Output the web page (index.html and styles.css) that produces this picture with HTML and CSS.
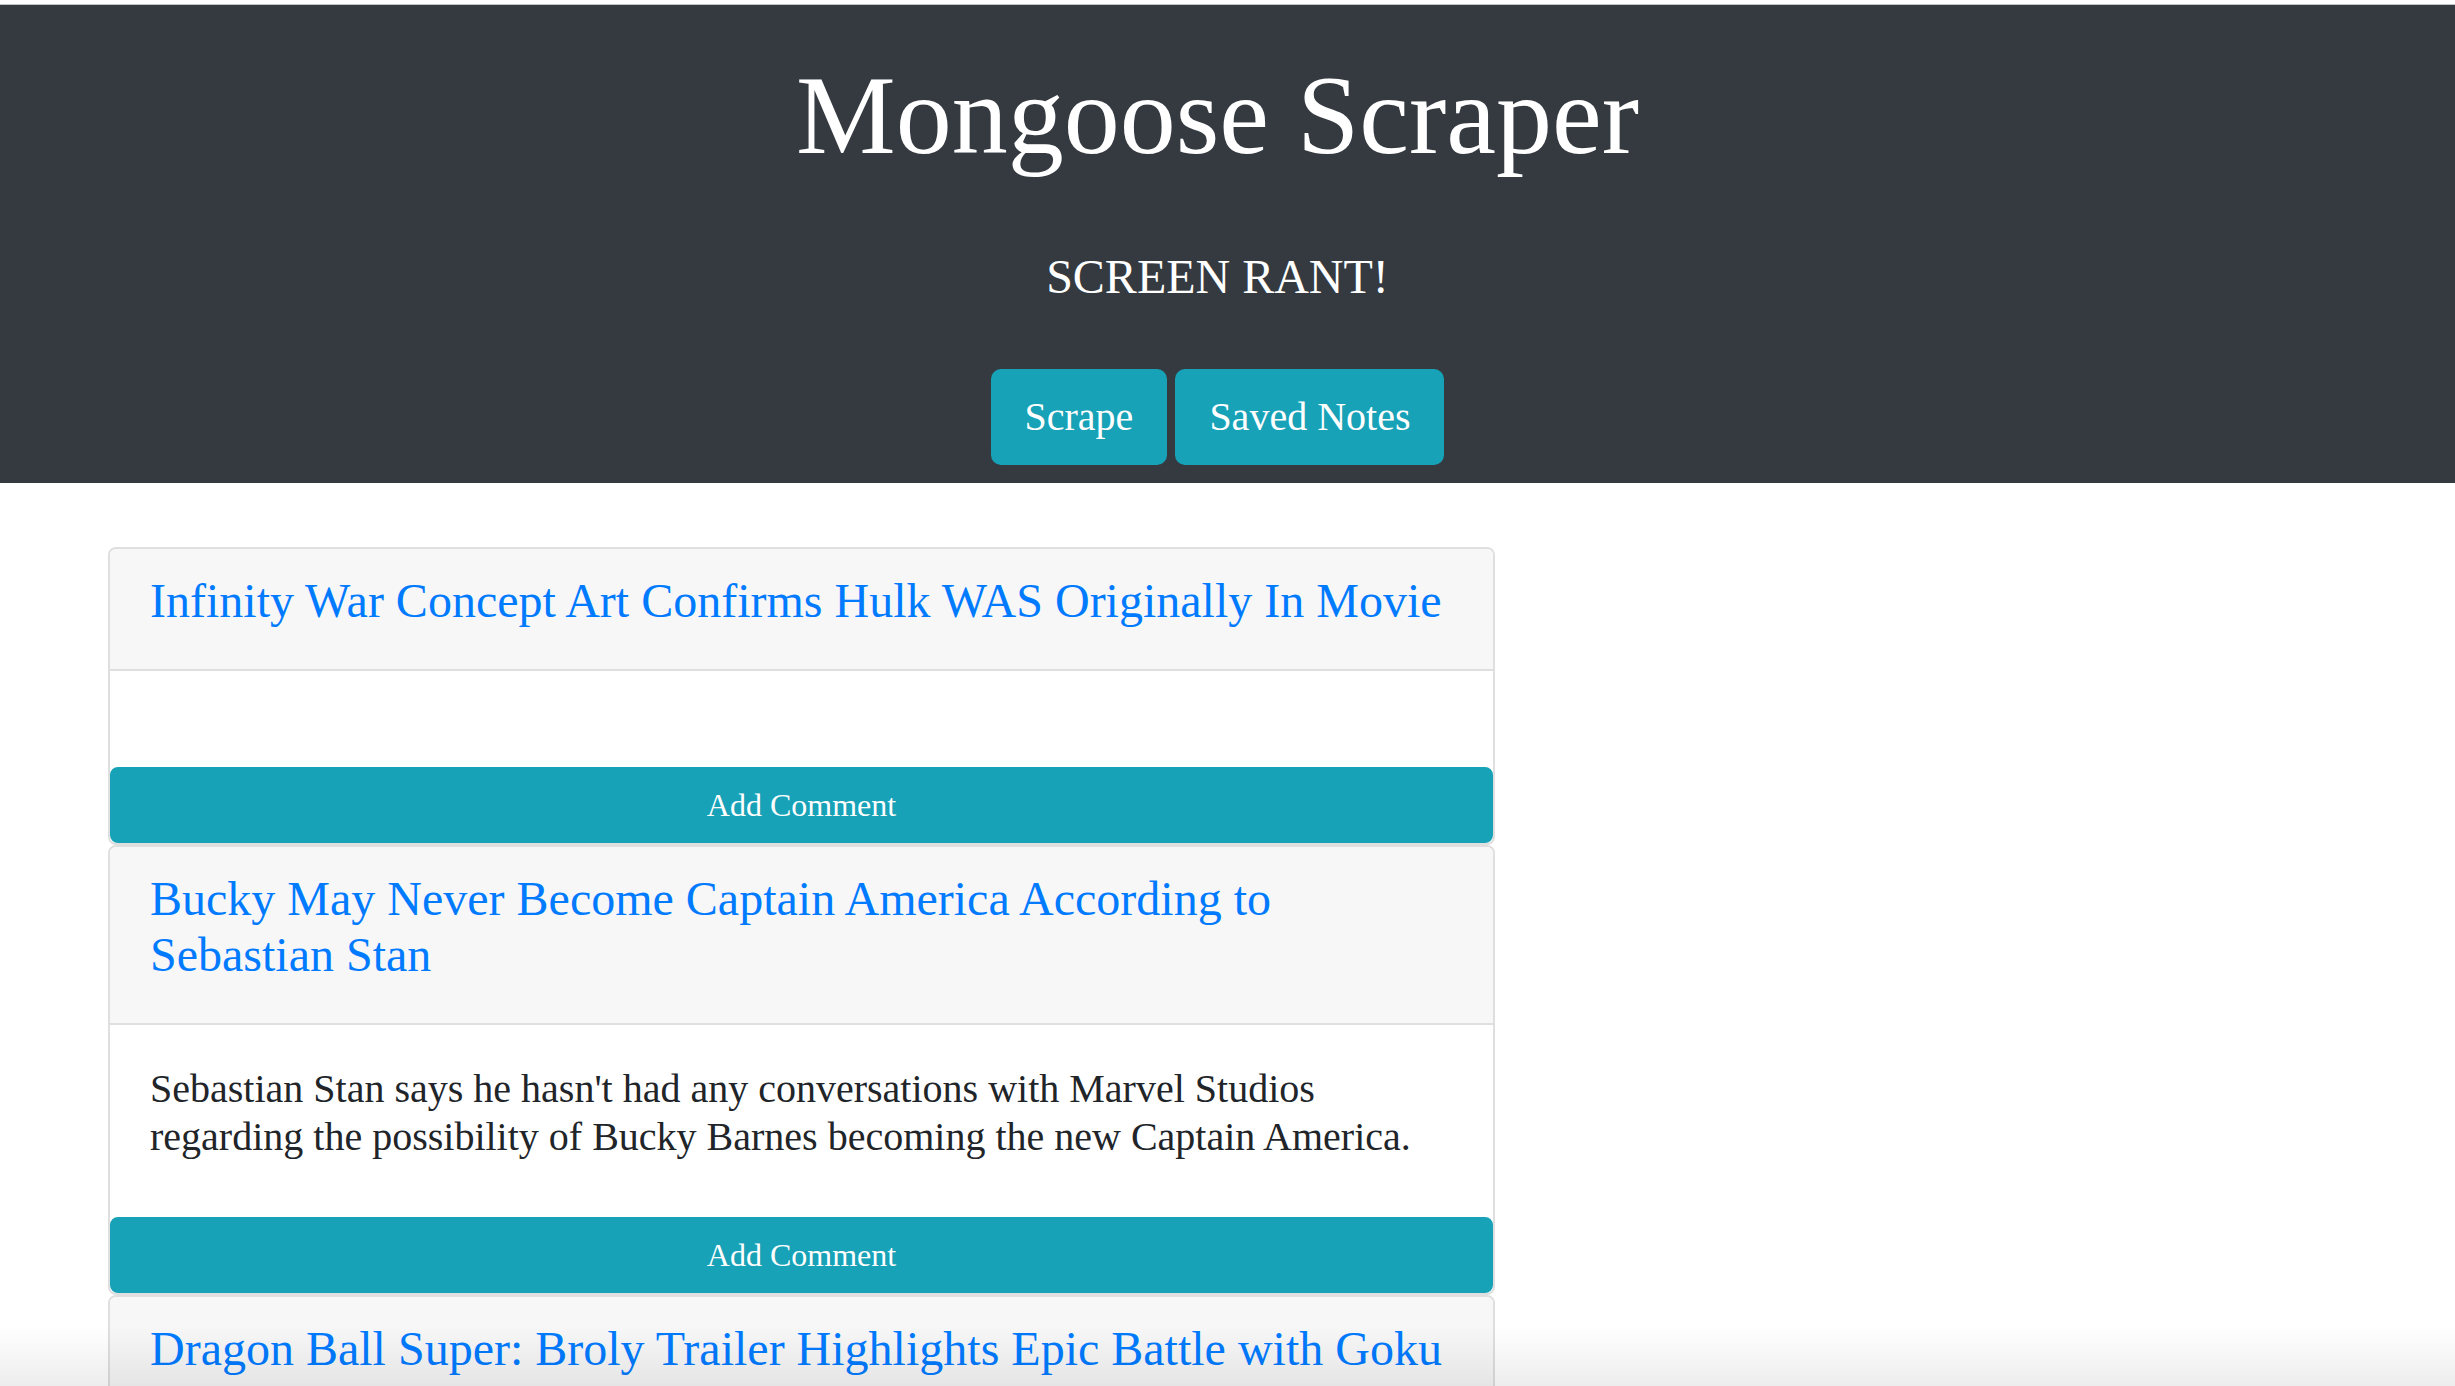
FILE: index.html
```html
<!DOCTYPE html>
<html lang="en">
<head>
<meta charset="utf-8">
<title>Mongoose Scraper</title>
<link rel="stylesheet" href="styles.css">
</head>
<body>
  <header class="hero">
    <div class="hero-inner">
      <h1 class="hero-title">Mongoose Scraper</h1>
      <h4 class="hero-sub">SCREEN RANT!</h4>
      <div class="hero-actions">
        <a class="btn btn-lg" href="#">Scrape</a>
        <a class="btn btn-lg" href="#">Saved Notes</a>
      </div>
    </div>
  </header>

  <main class="articles">
    <div class="card">
      <div class="card-header">
        <h4 class="card-title"><a href="#">Infinity War Concept Art Confirms Hulk WAS Originally In Movie</a></h4>
      </div>
      <div class="card-body">
        <p class="card-text"></p>
      </div>
      <button class="btn btn-block">Add Comment</button>
    </div>

    <div class="card">
      <div class="card-header">
        <h4 class="card-title"><a href="#">Bucky May Never Become Captain America According to Sebastian Stan</a></h4>
      </div>
      <div class="card-body">
        <p class="card-text">Sebastian Stan says he hasn't had any conversations with Marvel Studios regarding the possibility of Bucky Barnes becoming the new Captain America.</p>
      </div>
      <button class="btn btn-block">Add Comment</button>
    </div>

    <div class="card">
      <div class="card-header">
        <h4 class="card-title"><a href="#">Dragon Ball Super: Broly Trailer Highlights Epic Battle with Goku</a></h4>
      </div>
      <div class="card-body">
        <p class="card-text"></p>
      </div>
      <button class="btn btn-block">Add Comment</button>
    </div>
  </main>

  <div class="bottom-fade"></div>
</body>
</html>
```

FILE: styles.css
```css
html, body {
  margin: 0;
  padding: 0;
  background: #ffffff;
}

body {
  font-family: "Liberation Serif", "Times New Roman", serif;
  color: #212529;
  padding-top: 4px;
}

.hero {
  background: #343a40;
  border-top: 1px solid #c3c4c5;
  color: #ffffff;
  padding: 43px 0 18px;
}

.hero-inner {
  text-align: center;
  padding-right: 20px;
}

.hero-title {
  margin: 0 0 66px;
  font-size: 112px;
  line-height: 134px;
  font-weight: 400;
}

.hero-sub {
  margin: 0 0 63px;
  font-size: 48px;
  line-height: 58px;
  font-weight: 400;
}

.hero-actions {
  display: flex;
  justify-content: center;
  gap: 8px;
}

.btn {
  display: inline-block;
  box-sizing: border-box;
  background: #17a2b8;
  border: 2px solid #17a2b8;
  color: #ffffff;
  font-family: "Liberation Serif", "Times New Roman", serif;
  text-decoration: none;
  text-align: center;
  cursor: pointer;
}

.btn-lg {
  font-size: 40px;
  line-height: 60px;
  padding: 16px 32px;
  border-radius: 10px;
}

.articles {
  margin: 64px 0 0 108px;
  width: 1387px;
}

.card {
  border: 2px solid #dfdfdf;
  border-radius: 8px;
  background: #ffffff;
  display: flex;
  flex-direction: column;
}

.card-header {
  background: #f7f7f7;
  border-bottom: 2px solid #dfdfdf;
  padding: 24px 40px;
  border-radius: 6px 6px 0 0;
}

.card-title {
  margin: 0 0 16px;
  font-size: 48px;
  line-height: 56px;
  font-weight: 400;
}

.card-title a {
  color: #007bff;
  text-decoration: none;
}

.card-body {
  padding: 40px;
}

.card-text {
  margin: 0 0 16px;
  font-size: 40px;
  line-height: 48px;
}

.btn-block {
  width: 100%;
  font-size: 32px;
  line-height: 48px;
  padding: 12px 24px;
  border-radius: 8px;
}

.bottom-fade {
  position: fixed;
  left: 0;
  right: 0;
  bottom: 0;
  height: 60px;
  background: linear-gradient(to bottom, rgba(0, 0, 0, 0), rgba(0, 0, 0, 0.07));
  pointer-events: none;
}
```
